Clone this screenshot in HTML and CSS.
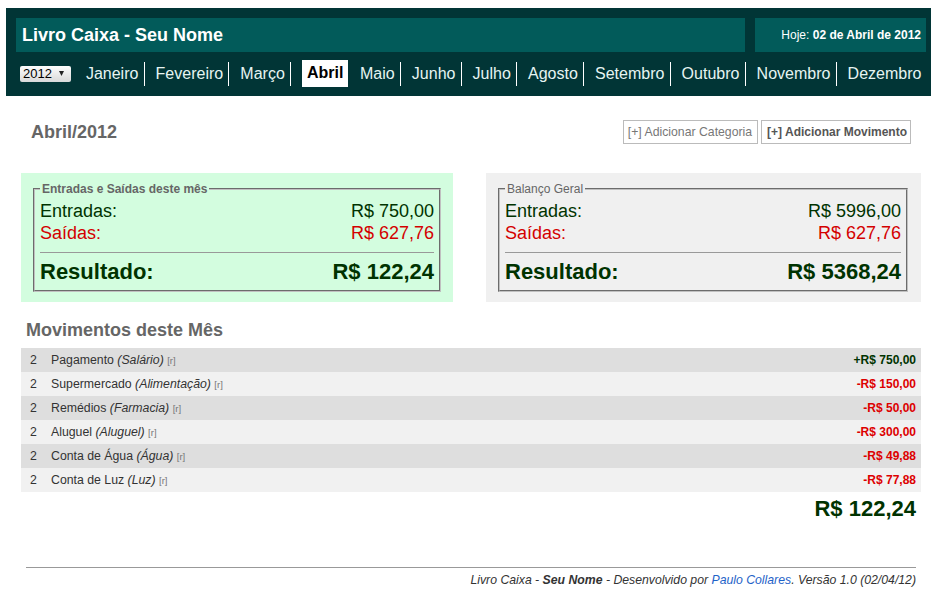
FILE: index.html
```html
<!DOCTYPE html>
<html lang="pt-BR">
<head>
<meta charset="utf-8">
<title>Livro Caixa - Seu Nome</title>
<link rel="stylesheet" href="styles.css">
</head>
<body>
<header class="topo">
  <div class="topo-linha">
    <h1 class="titulo">Livro Caixa - Seu Nome</h1>
    <div class="hoje">Hoje: <b>02 de Abril de 2012</b></div>
  </div>
  <nav class="meses">
    <span class="ano">2012<svg class="seta" width="5" height="5" viewBox="0 0 5 5"><polygon points="0,0 5,0 2.5,5" fill="#222"/></svg></span>
    <a class="mes" href="#">Janeiro</a>
    <a class="mes" href="#">Fevereiro</a>
    <a class="mes" href="#">Março</a>
    <a class="mes ativo" href="#">Abril</a>
    <a class="mes" href="#">Maio</a>
    <a class="mes" href="#">Junho</a>
    <a class="mes" href="#">Julho</a>
    <a class="mes" href="#">Agosto</a>
    <a class="mes" href="#">Setembro</a>
    <a class="mes" href="#">Outubro</a>
    <a class="mes" href="#">Novembro</a>
    <a class="mes ultimo" href="#">Dezembro</a>
  </nav>
</header>

<main class="conteudo">
  <div class="barra">
    <h2 class="mes-titulo">Abril/2012</h2>
    <div class="acoes">
      <a class="botao" href="#">[+] Adicionar Categoria</a>
      <a class="botao forte" href="#">[+] Adicionar Movimento</a>
    </div>
  </div>

  <div class="paineis">
    <div class="painel verde">
      <fieldset class="quadro">
        <legend class="legenda forte">Entradas e Saídas deste mês</legend>
        <div class="linha entrada"><span>Entradas:</span><span>R$ 750,00</span></div>
        <div class="linha saida"><span>Saídas:</span><span>R$ 627,76</span></div>
        <div class="divisor"></div>
        <div class="linha resultado"><span>Resultado:</span><span>R$ 122,24</span></div>
      </fieldset>
    </div>
    <div class="painel cinza">
      <fieldset class="quadro">
        <legend class="legenda">Balanço Geral</legend>
        <div class="linha entrada"><span>Entradas:</span><span>R$ 5996,00</span></div>
        <div class="linha saida"><span>Saídas:</span><span>R$ 627,76</span></div>
        <div class="divisor"></div>
        <div class="linha resultado"><span>Resultado:</span><span>R$ 5368,24</span></div>
      </fieldset>
    </div>
  </div>

  <h2 class="secao">Movimentos deste Mês</h2>

  <div class="movimentos">
    <div class="mov escuro"><span class="dia">2</span><span class="desc">Pagamento <i>(Salário)</i> <a class="rem" href="#">[r]</a></span><span class="valor pos">+R$ 750,00</span></div>
    <div class="mov claro"><span class="dia">2</span><span class="desc">Supermercado <i>(Alimentação)</i> <a class="rem" href="#">[r]</a></span><span class="valor neg">-R$ 150,00</span></div>
    <div class="mov escuro"><span class="dia">2</span><span class="desc">Remédios <i>(Farmacia)</i> <a class="rem" href="#">[r]</a></span><span class="valor neg">-R$ 50,00</span></div>
    <div class="mov claro"><span class="dia">2</span><span class="desc">Aluguel <i>(Aluguel)</i> <a class="rem" href="#">[r]</a></span><span class="valor neg">-R$ 300,00</span></div>
    <div class="mov escuro"><span class="dia">2</span><span class="desc">Conta de Água <i>(Água)</i> <a class="rem" href="#">[r]</a></span><span class="valor neg">-R$ 49,88</span></div>
    <div class="mov claro"><span class="dia">2</span><span class="desc">Conta de Luz <i>(Luz)</i> <a class="rem" href="#">[r]</a></span><span class="valor neg">-R$ 77,88</span></div>
  </div>

  <div class="total">R$ 122,24</div>
</main>

<footer class="rodape">
  Livro Caixa - <b>Seu Nome</b> - Desenvolvido por <a class="autor" href="#">Paulo Collares</a>. Versão 1.0 (02/04/12)
</footer>
</body>
</html>
```

FILE: styles.css
```css
* { box-sizing: border-box; }

body {
  margin: 0;
  background: #fff;
  font-family: "Liberation Sans", Arial, sans-serif;
  color: #333;
}

a { text-decoration: none; }

/* Header */
.topo {
  margin: 8px 10px 0 6px;
  padding: 10px 5px 9px 10px;
  background: #013536;
}

.topo-linha {
  display: flex;
  gap: 10px;
  height: 34px;
}

.titulo {
  flex: 1;
  margin: 0;
  padding-left: 6px;
  background: #025b5a;
  color: #fff;
  font-size: 18px;
  font-weight: bold;
  line-height: 34px;
}

.hoje {
  width: 171px;
  background: #025b5a;
  color: #fff;
  font-size: 12px;
  line-height: 34px;
  text-align: right;
  padding-right: 5px;
  white-space: nowrap;
}

.meses {
  display: flex;
  align-items: center;
  margin-top: 8px;
  height: 27px;
}

.ano {
  display: inline-flex;
  align-items: center;
  height: 16px;
  margin: 0 15px 0 4px;
  padding: 0 7px 0 3px;
  background: linear-gradient(#fdfdfd, #d9d9d9);
  border-radius: 2px;
  color: #000;
  font-size: 13px;
}

.seta { margin-left: 7px; }

.mes {
  display: block;
  color: #e6f4f2;
  font-size: 16px;
  line-height: 18px;
  padding: 3px 5.2px 3px 0;
  border-right: 1px solid #fff;
  margin-right: 11px;
}

.mes.ativo {
  background: #fff;
  color: #000;
  font-weight: bold;
  padding: 4px 5px 5px 5px;
  border-right: 0;
  margin-right: 11.5px;
}

.mes.ultimo {
  border-right: 0;
  margin-right: 0;
}

/* Content */
.conteudo {
  padding: 0 20px 0 21px;
}

.barra {
  display: flex;
  justify-content: space-between;
  align-items: center;
  margin-top: 24px;
  padding: 0 10px;
  height: 24px;
}

.mes-titulo {
  margin: 0;
  color: #666;
  font-size: 18px;
  font-weight: bold;
}

.acoes {
  display: flex;
  gap: 3px;
}

.botao {
  display: block;
  border: 1px solid #bbb;
  padding: 4px 5px 4px 4px;
  font-size: 12.25px;
  line-height: 14px;
  color: #777;
}

.botao.forte {
  font-weight: bold;
  font-size: 12px;
  color: #555;
  padding: 4px 3px 4px 5px;
}

.paineis {
  display: grid;
  grid-template-columns: 432px 1fr;
  column-gap: 33px;
  margin-top: 29px;
}

.painel {
  padding: 9px 12px 10px 12px;
}

.painel.verde { background: #d3fddf; }
.painel.cinza { background: #f0f0f0; padding-right: 13px; }

.quadro {
  margin: 0;
  padding: 4px 5px 4px 5px;
  border: 2px groove #c0c0c0;
}

.legenda {
  padding: 0 2px;
  font-size: 12px;
  line-height: 14px;
  color: #666;
}

.legenda.forte { font-weight: bold; }

.linha {
  display: flex;
  justify-content: space-between;
  font-size: 18px;
  line-height: 22px;
}

.entrada { color: #003300; }
.saida { color: #d40000; }

.divisor {
  border-top: 1px solid #999;
  margin: 8px 0 5px 0;
}

.linha.resultado {
  font-size: 22px;
  line-height: 28px;
  font-weight: bold;
  color: #003300;
}

.secao {
  margin: 17px 0 7px 5px;
  color: #666;
  font-size: 18px;
  line-height: 22px;
  font-weight: bold;
}

.movimentos {
  display: flex;
  flex-direction: column;
}

.mov {
  display: flex;
  align-items: center;
  height: 24px;
  font-size: 12.3px;
  color: #333;
}

.mov.escuro { background: #dedede; }
.mov.claro { background: #f1f1f1; }

.dia {
  width: 30px;
  padding-left: 9px;
}

.desc { flex: 1; }

.rem {
  font-size: 9.5px;
  color: #777;
}

.valor {
  font-weight: bold;
  font-size: 12px;
  padding-right: 5px;
}

.valor.pos { color: #003300; }
.valor.neg { color: #dd0000; }

.total {
  margin-top: 4px;
  padding-right: 5px;
  text-align: right;
  font-size: 22px;
  line-height: 26px;
  font-weight: bold;
  color: #003300;
}

/* Footer */
.rodape {
  margin: 45px 25px 0 26px;
  padding-top: 5px;
  border-top: 1px solid #999;
  text-align: right;
  font-size: 12.25px;
  line-height: 14px;
  font-style: italic;
  color: #333;
}

.autor {
  color: #1f63c8;
}
```
